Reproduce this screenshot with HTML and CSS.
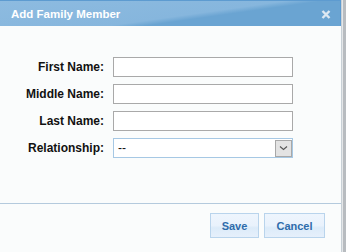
FILE: index.html
```html
<!DOCTYPE html>
<html lang="en">
  <head>
    <meta charset="UTF-8" />
    <meta name="viewport" content="width=device-width, initial-scale=1.0" />
    <title>Add Family Member</title>
    <link rel="stylesheet" href="styles.css">
  </head>
  <body>
    <div class="screen">
      <div class="dialog">
        <div class="titlebar">
          <span class="title">Add Family Member</span>
          <span class="close">
            <svg width="10" height="9" viewBox="0 0 10 9">
              <path d="M1.5 1 L8.5 8 M8.5 1 L1.5 8" fill="none" stroke="#dde8f2" stroke-width="2.4" />
            </svg>
          </span>
        </div>

        <div class="dialog-body">
          <form id="member-form" class="member-form">
            <div class="form-row">
              <label for="first_name">First Name:</label>
              <input type="text" id="first_name" name="first_name" />
            </div>
            <div class="form-row">
              <label for="middle_name">Middle Name:</label>
              <input type="text" id="middle_name" name="middle_name" />
            </div>
            <div class="form-row">
              <label for="last_name">Last Name:</label>
              <input type="text" id="last_name" name="last_name" />
            </div>
            <div class="form-row">
              <label for="relationship">Relationship:</label>
              <div class="select-box" id="relationship">
                <span class="select-value">--</span>
                <span class="select-btn">
                  <svg width="9" height="6" viewBox="0 0 9 6">
                    <path d="M1 1.5 L4.5 4.5 L8 1.5" fill="none" stroke="#555" stroke-width="1.1" />
                  </svg>
                </span>
              </div>
            </div>
          </form>
        </div>

        <div class="dialog-footer">
          <button type="button" class="btn btn-save">Save</button>
          <button type="button" class="btn btn-cancel">Cancel</button>
        </div>
      </div>
      <div class="page-edge"></div>
    </div>
  </body>
</html>
```

FILE: styles.css
```css
html,
body {
  margin: 0;
  padding: 0;
}
body {
  font-family: "Liberation Sans", Arial, sans-serif;
  width: 346px;
  height: 252px;
  overflow: hidden;
  background-color: #fafcfc;
}
.screen {
  display: flex;
  height: 252px;
}
.dialog {
  width: 341px;
  display: flex;
  flex-direction: column;
  background-color: #fafcfc;
  border-right: 1px solid #c8d0d6;
}
.titlebar {
  height: 25px;
  border-top: 1px solid #5d9bd0;
  display: flex;
  align-items: center;
  justify-content: space-between;
  padding: 0 10px 0 11px;
  background: linear-gradient(172deg, #8dbbe0 0%, #86b6dd 55%, #6aa4d2 62%, #6aa4d2 100%);
  box-shadow: inset -1px 0 0 #5d9bd0;
}
.title {
  color: #ffffff;
  font-weight: bold;
  font-size: 11.5px;
  padding-top: 1px;
}
.close {
  display: flex;
  padding-top: 2px;
}
.dialog-body {
  height: 146px;
  padding-top: 31px;
}
.member-form {
  display: flex;
  flex-direction: column;
  gap: 7px;
}
.form-row {
  display: flex;
  align-items: center;
  height: 20px;
}
.form-row label {
  width: 104px;
  text-align: right;
  font-weight: bold;
  font-size: 12px;
  color: #111;
  margin-right: 9px;
}
.form-row input {
  width: 180px;
  height: 20px;
  box-sizing: border-box;
  border: 1px solid #a9a9a9;
  background: #fff;
  padding: 0 4px;
  margin: 0;
}
.select-box {
  width: 180px;
  height: 20px;
  box-sizing: border-box;
  border: 1px solid #a6c8e4;
  background: #fff;
  display: flex;
  align-items: center;
  justify-content: space-between;
}
.select-value {
  font-size: 12px;
  padding-left: 4px;
  color: #111;
}
.select-btn {
  width: 17px;
  height: 17px;
  margin-right: 0;
  box-sizing: border-box;
  border: 1px solid #a8a8a8;
  background: #e3e3e3;
  display: flex;
  align-items: center;
  justify-content: center;
}
.dialog-footer {
  border-top: 1px solid #b4cadd;
  display: flex;
  justify-content: flex-end;
  gap: 5px;
  padding: 9px 16px 0 0;
}
.btn {
  height: 25px;
  border: 1px solid #b9d4ec;
  background: linear-gradient(#eef5fd 0%, #e9f2fc 50%, #dcebf9 60%, #e6f0fb 100%);
  color: #2f6cab;
  font-family: "Liberation Sans", Arial, sans-serif;
  font-weight: bold;
  font-size: 11px;
  padding: 0;
  cursor: pointer;
}
.btn-save {
  width: 49px;
}
.btn-cancel {
  width: 61px;
}
.page-edge {
  flex: 1;
  background: linear-gradient(90deg, #e4e6e8 0, #e4e6e8 1px, #b8bcc0 1px, #b8bcc0 100%);
}
```
